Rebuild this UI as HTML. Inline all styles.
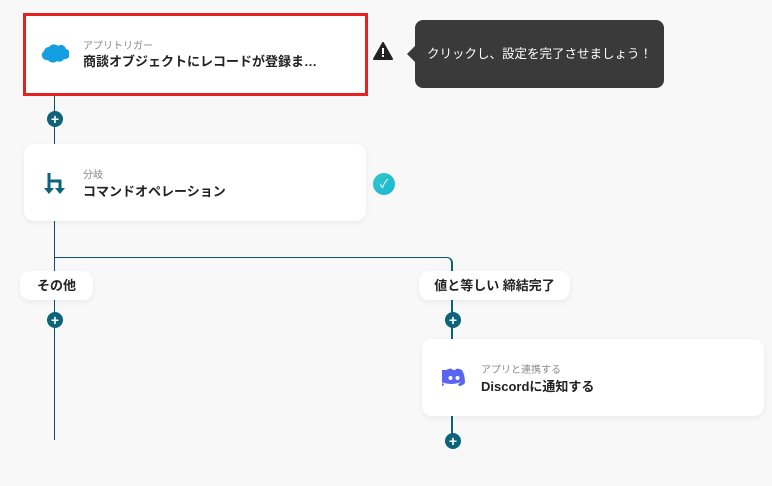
<!DOCTYPE html><html><head><meta charset="utf-8"><style>
body{margin:0;width:772px;height:486px;background:#f8f8f8;font-family:"Liberation Sans","Noto Sans CJK JP",sans-serif;position:relative;overflow:hidden}
.a{position:absolute}
.card{position:absolute;background:#fff;border-radius:10px;box-shadow:0 2px 6px rgba(0,0,0,.06)}
.sm{position:absolute;font-size:10px;color:#888}
.tt{position:absolute;font-size:13px;font-weight:bold;color:#222}
.plus{position:absolute;width:16px;height:16px;border-radius:50%;background:#0d6377;color:#fff;font-size:14px;line-height:16px;text-align:center;font-weight:bold}
.pill{position:absolute;background:#fff;border-radius:10px;font-size:13px;font-weight:bold;color:#222;text-align:center;line-height:29px;height:29px;box-shadow:0 2px 6px rgba(0,0,0,.06)}
.v{position:absolute;width:2px;background:#0d6377}
</style></head><body>
<div class="v" style="left:54px;top:96px;height:344px;width:1px;background:#0d4f60"></div>
<div class="a" style="left:55px;top:257px;width:398px;height:8px;border-top:1px solid #0d4f60;border-right:2px solid #0d6377;border-top-right-radius:6px;box-sizing:border-box"></div>
<div class="v" style="left:451px;top:264px;height:176px"></div>
<div class="a" style="left:23px;top:13px;width:339px;height:77px;background:#fff;border:3px solid #e42222"></div>
<svg class="a" style="left:41px;top:43px" width="28" height="20" viewBox="0 0 28 20"><path d="M8 4a6 6 0 0 1 9-1 5 5 0 0 1 8 3 5 5 0 0 1-2 10 5 5 0 0 1-7 2 6 6 0 0 1-9-1A5 5 0 0 1 3 8a5 5 0 0 1 5-4z" fill="#14a0e0"/></svg>
<div class="sm" style="left:83px;top:37px">アプリトリガー</div>
<div class="tt" style="left:83px;top:51px">商談オブジェクトにレコードが登録ま…</div>
<svg class="a" style="left:373px;top:42px" width="20" height="18" viewBox="0 0 20 18"><path d="M10 1L19 17H1z" fill="#222" stroke="#222" stroke-linejoin="round" stroke-width="2"/><rect x="9" y="6" width="2" height="6" fill="#fff"/><rect x="9" y="13" width="2" height="2" fill="#fff"/></svg>
<div class="a" style="left:415px;top:20px;width:249px;height:68px;background:#3a3a3a;border-radius:8px;color:#fff;font-size:12.5px;line-height:68px;padding-left:12px;box-sizing:border-box">クリックし、設定を完了させましょう！</div>
<div class="a" style="left:407px;top:46px;width:0;height:0;border:8px solid transparent;border-right-color:#3a3a3a;border-left:0"></div>
<div class="plus" style="left:47px;top:111px">+</div>
<div class="card" style="left:24px;top:144px;width:342px;height:77px"></div>
<svg class="a" style="left:44px;top:172px" width="24" height="24" viewBox="0 0 24 24"><path d="M5 1v17M5 9h11v9" stroke="#0d6377" stroke-width="3" fill="none"/><path d="M0 16l5 6 5-6zM11 16l5 6 5-6z" fill="#0d6377"/></svg>
<div class="sm" style="left:83px;top:166px">分岐</div>
<div class="tt" style="left:83px;top:181px">コマンドオペレーション</div>
<div class="a" style="left:373px;top:173px;width:22px;height:22px;border-radius:50%;background:linear-gradient(135deg,#33c7c7,#18b6d6);color:#fff;font-size:12px;text-align:center;line-height:22px">✓</div>
<div class="pill" style="left:20px;top:271px;width:73px">その他</div>
<div class="pill" style="left:419px;top:271px;width:151px">値と等しい 締結完了</div>
<div class="plus" style="left:47px;top:312px">+</div>
<div class="plus" style="left:445px;top:312px">+</div>
<div class="card" style="left:422px;top:339px;width:342px;height:77px"></div>
<svg class="a" style="left:442px;top:368px" width="24" height="19" viewBox="0 0 24 19"><path d="M4 2Q8 0 10 1l1 1h2l1-1q2-1 6 1 3 5 3 13-3 3-6 3l-1-2q2-1 3-2-10 4-20 0 1 1 3 2l-1 2q-3 0-6-3 0-8 3-13z" fill="#5865f2"/><circle cx="8.5" cy="10" r="2" fill="#fff"/><circle cx="15.5" cy="10" r="2" fill="#fff"/></svg>
<div class="sm" style="left:481px;top:361px">アプリと連携する</div>
<div class="tt" style="left:481px;top:376px">Discordに通知する</div>
<div class="plus" style="left:445px;top:433px">+</div>
</body></html>
